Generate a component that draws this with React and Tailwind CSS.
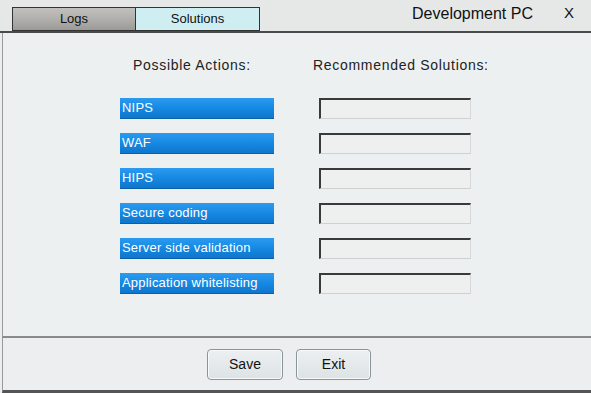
import React from 'react';

const actions = [
  'NIPS',
  'WAF',
  'HIPS',
  'Secure coding',
  'Server side validation',
  'Application whitelisting',
];

export default function App() {
  return (
    <div className="w-[591px] h-[393px] bg-[#ebeeef] flex flex-col overflow-hidden" style={{ fontFamily: '"Liberation Sans", Arial, sans-serif' }}>
      {/* Top bar with tabs */}
      <div className="h-[33px] flex items-end bg-[#e6e8e8] border-b-2 border-[#4a4a4a] shrink-0">
        <div className="flex ml-[12px]">
          <div className="w-[124px] h-[24px] flex items-center justify-center border border-[#333] bg-gradient-to-b from-[#c2c0bd] via-[#b2b0ad] to-[#9c9a97] text-[13px] text-[#111]">
            Logs
          </div>
          <div className="w-[124px] h-[24px] flex items-center justify-center border border-l-0 border-[#333] bg-[#cfeef2] text-[13px] text-[#111]">
            Solutions
          </div>
        </div>
        <div className="ml-auto flex items-center self-stretch pb-[4px]">
          <span className="text-[16px] text-[#111] mr-[31px]">Development PC</span>
          <span className="text-[15px] text-[#111] mr-[17px]">X</span>
        </div>
      </div>

      {/* Main content */}
      <div className="flex-1 flex ml-[2px] border-l border-[#9a9a9a] border-b-2 border-b-[#8a8a8a] bg-[#edf0f1]">
        <div className="flex gap-[45px] ml-[117px] mt-[22px]">
          <div className="flex flex-col w-[154px]">
            <div className="text-[14px] tracking-[0.7px] text-[#222] whitespace-nowrap ml-[13px] mb-[22px]">Possible Actions:</div>
            <div className="flex flex-col gap-[14px]">
              {actions.map((a) => (
                <div
                  key={a}
                  className="h-[21px] flex items-center px-[2px] text-[13px] tracking-[0.2px] text-white bg-gradient-to-b from-[#2a9bf0] via-[#1689e3] to-[#0f76cc] border-b border-[#0b5fa8]"
                >
                  {a}
                </div>
              ))}
            </div>
          </div>
          <div className="flex flex-col w-[152px]">
            <div className="text-[14px] tracking-[0.7px] text-[#222] whitespace-nowrap -ml-[6px] mb-[22px]">Recommended Solutions:</div>
            <div className="flex flex-col gap-[14px]">
              {actions.map((a) => (
                <div
                  key={a}
                  className="h-[21px] border-t-2 border-l-2 border-t-[#3a3a3a] border-l-[#3a3a3a] border-r border-b border-r-[#d6d8d8] border-b-[#cfd1d1] bg-[#eef0f0]"
                />
              ))}
            </div>
          </div>
        </div>
      </div>

      {/* Bottom bar */}
      <div className="h-[55px] shrink-0 flex items-center gap-[13px] ml-[2px] border-l border-[#9a9a9a] border-b-[3px] border-b-[#555] bg-[#eceeef] pl-[204px]">
        <button className="w-[76px] h-[31px] rounded-[4px] border border-[#8a9599] bg-gradient-to-b from-[#edf0f1] to-[#dde2e4] text-[14px] text-[#111] shadow-[inset_0_0_0_1px_#f7f9fa]">
          Save
        </button>
        <button className="w-[75px] h-[31px] rounded-[4px] border border-[#8a9599] bg-gradient-to-b from-[#edf0f1] to-[#dde2e4] text-[14px] text-[#111] shadow-[inset_0_0_0_1px_#f7f9fa]">
          Exit
        </button>
      </div>
    </div>
  );
}
